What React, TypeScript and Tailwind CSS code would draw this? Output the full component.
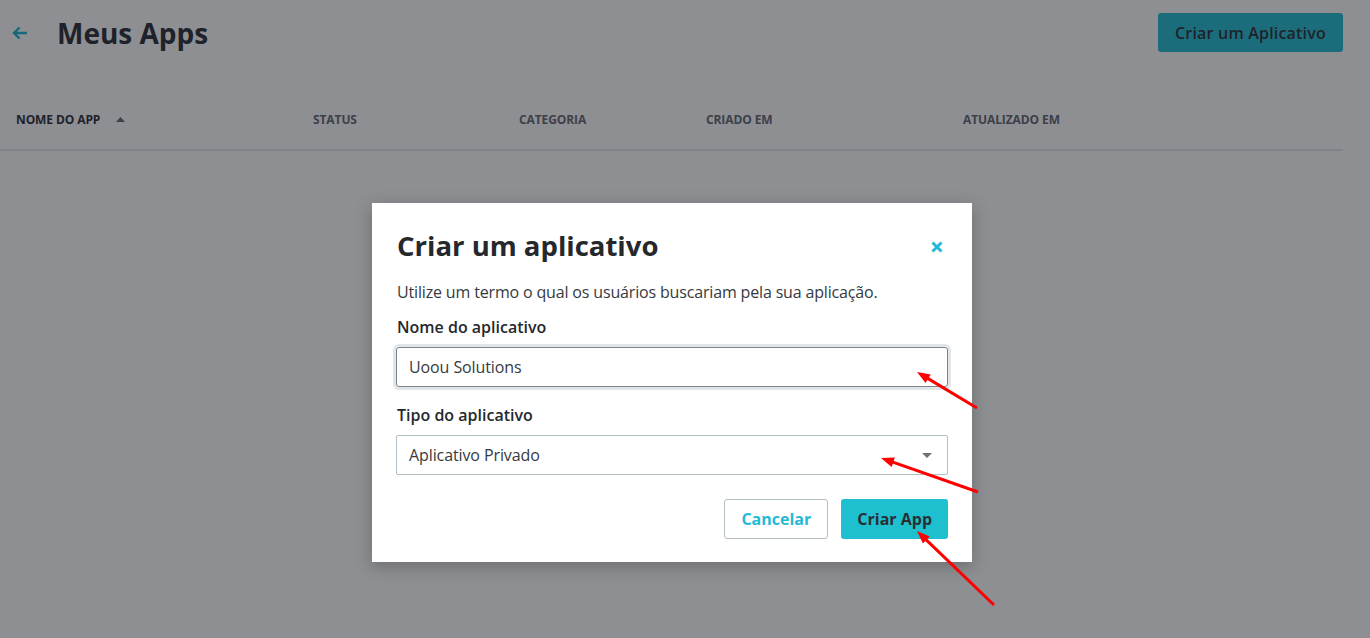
const font = { fontFamily: '"Open Sans", "Noto Sans", Arial, sans-serif' };

function RedArrow({ x1, y1, x2, y2 }: { x1: number; y1: number; x2: number; y2: number }) {
  // x1,y1 = cauda ; x2,y2 = ponta
  const dx = x2 - x1;
  const dy = y2 - y1;
  const len = Math.sqrt(dx * dx + dy * dy);
  const ux = dx / len;
  const uy = dy / len;
  const hl = 13;
  const hw = 5;
  const bx = x2 - ux * hl;
  const by = y2 - uy * hl;
  const pts = `${x2},${y2} ${bx - uy * hw},${by + ux * hw} ${bx + uy * hw},${by - ux * hw}`;
  return (
    <g>
      <line x1={x1} y1={y1} x2={bx + ux * 2} y2={by + uy * 2} stroke="#ff0000" strokeWidth={3} />
      <polygon points={pts} fill="#ff0000" />
    </g>
  );
}

export default function App() {
  const cols = ['Nome do App', 'Status', 'Categoria', 'Criado em', 'Atualizado em'];

  return (
    <div className="relative w-[1370px] h-[638px] overflow-hidden bg-white text-[#363a41]" style={font}>
      {/* PÁGINA */}
      <div className="pt-[13px] pr-[27px]">
        <div className="flex items-center justify-between h-[39px]">
          <div className="flex items-center">
            <svg width="16" height="14" viewBox="0 0 16 14" className="ml-[12px] text-[#25b9d7]">
              <path d="M15 7H2.5M7.5 1.5 2 7l5.5 5.5" fill="none" stroke="currentColor" strokeWidth="2.4" />
            </svg>
            <h1 className="ml-[29px] text-[28px] font-bold leading-none">Meus Apps</h1>
          </div>
          <button className="h-[39px] px-[17px] rounded-[3px] bg-[#31c2d3] text-[16px] font-semibold tracking-[0.2px] text-[#363a41]">
            Criar um Aplicativo
          </button>
        </div>

        <div className="mt-[39px] grid grid-cols-[313px_206px_187px_257px_1fr] items-center h-[60px] border-b-2 border-[#e6e8ea]">
          {cols.map((c, i) => (
            <div
              key={c}
              className={`flex items-center text-[12px] font-bold uppercase tracking-[-0.1px] ${i === 0 ? 'pl-4 text-[#363a41]' : 'text-[#6c7079]'}`}
            >
              {c}
              {i === 0 && (
                <svg width="9" height="5" viewBox="0 0 9 5" className="ml-[16px] mb-[1px]">
                  <path d="M0 5 4.5 0 9 5Z" fill="#6c7079" />
                </svg>
              )}
            </div>
          ))}
        </div>
      </div>

      {/* FUNDO DO MODAL */}
      <div className="absolute inset-0 bg-[#04060f]/[0.45]" />

      {/* MODAL */}
      <div className="absolute left-[372px] top-[203px] w-[600px] bg-white shadow-[0_4px_16px_rgba(0,0,0,0.25)] pt-[24px] pb-[23px] pl-[25px] pr-[24px]">
        <div className="flex items-center justify-between h-[38px]">
          <h2 className="text-[27.5px] font-bold text-[#25282d] leading-none">Criar um aplicativo</h2>
          <svg width="12" height="12" viewBox="0 0 12 12" className="mr-[5px] mt-[1px]">
            <path d="M1.5 1.5l9 9M10.5 1.5l-9 9" stroke="#25b9d7" strokeWidth="3" />
          </svg>
        </div>

        <p className="mt-[15px] text-[16px] leading-6 tracking-[-0.16px] text-[#363a41]">
          Utilize um termo o qual os usuários buscariam pela sua aplicação.
        </p>

        <label className="block mt-[11px] text-[16px] leading-6 font-semibold text-[#25282d]">Nome do aplicativo</label>
        <div className="mt-[8px] -ml-px h-[40px] rounded-[3px] border border-[#7a868c] shadow-[0_0_0_3px_#e3e6e8] flex items-center pl-[12px] text-[16px] tracking-[-0.1px] text-[#363a41]">
          Uoou Solutions
        </div>

        <label className="block mt-[16px] text-[16px] leading-6 font-semibold text-[#25282d]">Tipo do aplicativo</label>
        <div className="mt-[8px] -ml-px h-[40px] rounded-[2px] border border-[#b3bfc4] flex items-center justify-between pl-[12px] pr-[15px] text-[16px] tracking-[-0.1px] text-[#363a41]">
          <span>Aplicativo Privado</span>
          <svg width="10" height="5" viewBox="0 0 10 5">
            <path d="M0 0h10L5 5Z" fill="#6c7079" />
          </svg>
        </div>

        <div className="mt-[24px] flex justify-end gap-[13px]">
          <button className="h-[40px] px-4 rounded-[3px] border border-[#b3bfc4] bg-white text-[16px] font-bold text-[#25b9d7]">
            Cancelar
          </button>
          <button className="h-[40px] px-4 rounded-[3px] bg-[#1ec0cf] text-[16px] font-bold text-[#2a2e34]">
            Criar App
          </button>
        </div>
      </div>

      {/* SETAS VERMELHAS */}
      <svg className="absolute inset-0 pointer-events-none" width="1370" height="638">
        <RedArrow x1={977} y1={408} x2={917} y2={372} />
        <RedArrow x1={978} y1={492} x2={881} y2={458} />
        <RedArrow x1={994} y1={605} x2={917} y2={531} />
      </svg>
    </div>
  );
}
